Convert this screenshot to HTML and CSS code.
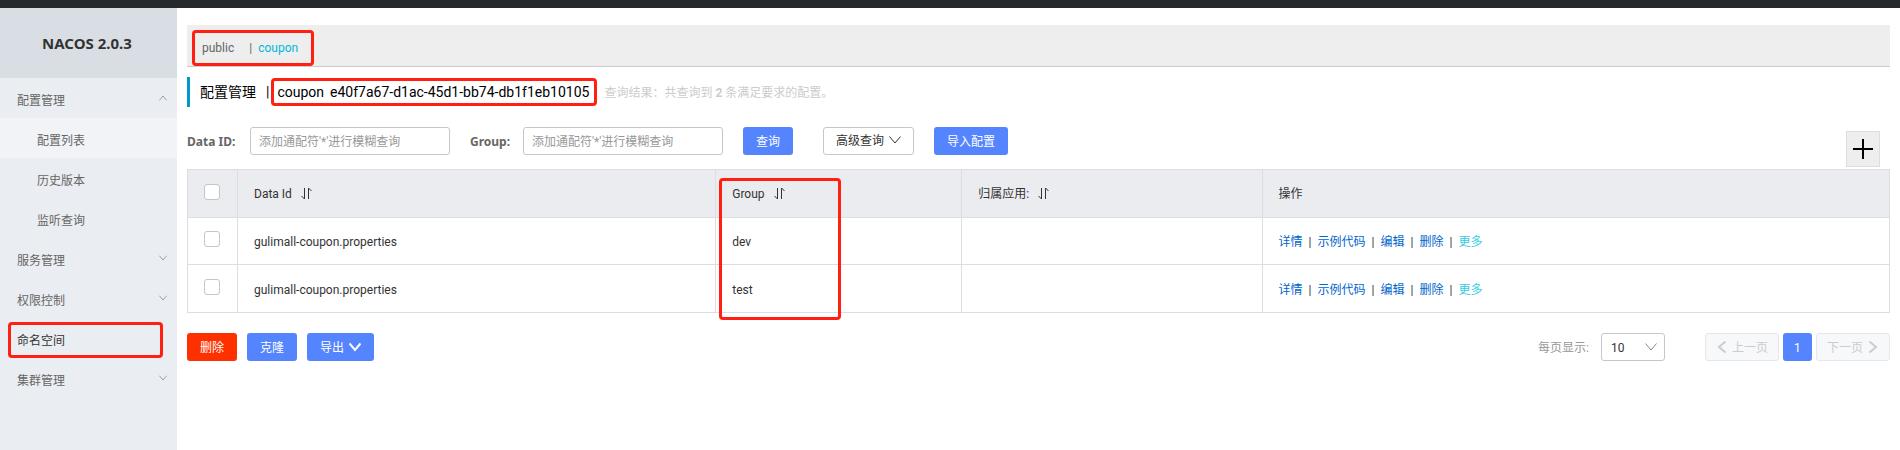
FILE: index.html
```html
<!DOCTYPE html>
<html lang="zh-CN">
<head>
<meta charset="utf-8">
<title>Nacos</title>
<link rel="stylesheet" href="styles.css">
</head>
<body>
<svg class="defs" aria-hidden="true">
  <symbol id="down" viewBox="0 0 12 12"><path d="M.5 2.500L6 9l5.500-6.500"/></symbol>
  <symbol id="up" viewBox="0 0 12 12"><path d="M.5 9.500L6 3l5.500 6.500"/></symbol>
  <symbol id="left" viewBox="0 0 12 12"><path d="M9.500.5L3 6l6.500 5.500"/></symbol>
  <symbol id="right" viewBox="0 0 12 12"><path d="M2.500.5L9 6l-6.500 5.500"/></symbol>
  <symbol id="sort" viewBox="0 0 12 13"><path d="M3.500 1v11L.5 9M7.500 12V1l3 3"/></symbol>
</svg>
<header class="topbar"></header>
<div class="layout">
  <aside class="sidebar">
    <h1 class="brand">NACOS 2.0.3</h1>
    <nav class="menu">
      <a class="item" href="#">配置管理<svg class="caret"><use href="#up"/></svg></a>
      <a class="item sub active" href="#">配置列表</a>
      <a class="item sub" href="#">历史版本</a>
      <a class="item sub" href="#">监听查询</a>
      <a class="item" href="#">服务管理<svg class="caret"><use href="#down"/></svg></a>
      <a class="item" href="#">权限控制<svg class="caret"><use href="#down"/></svg></a>
      <a class="item current" href="#">命名空间<span class="mark mark-menu"></span></a>
      <a class="item" href="#">集群管理<svg class="caret"><use href="#down"/></svg></a>
    </nav>
  </aside>
  <main class="main">
    <div class="namespaces">
      <a class="ns" href="#">public</a><span class="bar">|</span><a class="ns selected" href="#">coupon</a>
      <span class="mark mark-ns"></span>
    </div>
    <div class="heading">
      <h2 class="title">配置管理</h2><span class="divider">|</span>
      <span class="namespace-id"><span>coupon</span><span>e40f7a67-d1ac-45d1-bb74-db1f1eb10105</span><span class="mark mark-id"></span></span>
      <span class="result">查询结果：共查询到 <b>2</b> 条满足要求的配置。</span>
    </div>
    <form class="filters">
      <label class="label" for="dataId">Data ID:</label>
      <input class="input" id="dataId" type="text" placeholder="添加通配符'*'进行模糊查询">
      <label class="label label-group" for="group">Group:</label>
      <input class="input" id="group" type="text" placeholder="添加通配符'*'进行模糊查询">
      <button class="btn primary search" type="button">查询</button>
      <button class="btn advanced" type="button">高级查询<svg class="icon"><use href="#down"/></svg></button>
      <button class="btn primary" type="button">导入配置</button>
      <button class="add" type="button" aria-label="新建配置"><svg viewBox="0 0 20 20"><path d="M0 10h20M10 0v20"/></svg></button>
    </form>
    <table class="table">
      <colgroup><col class="c-check"><col class="c-data"><col class="c-group"><col class="c-app"><col></colgroup>
      <thead>
        <tr>
          <th class="check"><input type="checkbox" aria-label="全选"></th>
          <th>Data Id<svg class="sort"><use href="#sort"/></svg></th>
          <th class="group-head">Group<svg class="sort"><use href="#sort"/></svg><span class="mark mark-group"></span></th>
          <th>归属应用:<svg class="sort"><use href="#sort"/></svg></th>
          <th>操作</th>
        </tr>
      </thead>
      <tbody>
        <tr>
          <td class="check"><input type="checkbox" aria-label="dev"></td>
          <td>gulimall-coupon.properties</td><td>dev</td><td></td>
          <td><div class="actions"><a href="#">详情</a><span>|</span><a href="#">示例代码</a><span>|</span><a href="#">编辑</a><span>|</span><a href="#">删除</a><span>|</span><a class="more" href="#">更多</a></div></td>
        </tr>
        <tr>
          <td class="check"><input type="checkbox" aria-label="test"></td>
          <td>gulimall-coupon.properties</td><td>test</td><td></td>
          <td><div class="actions"><a href="#">详情</a><span>|</span><a href="#">示例代码</a><span>|</span><a href="#">编辑</a><span>|</span><a href="#">删除</a><span>|</span><a class="more" href="#">更多</a></div></td>
        </tr>
      </tbody>
    </table>
    <div class="footer">
      <button class="btn danger" type="button">删除</button>
      <button class="btn primary" type="button">克隆</button>
      <button class="btn primary" type="button">导出<svg class="icon"><use href="#down"/></svg></button>
      <div class="pagination">
        <label class="size-label" for="size">每页显示:</label>
        <span class="select"><select id="size"><option>10</option></select><svg class="icon"><use href="#down"/></svg></span>
        <button class="btn page" type="button" disabled><svg class="icon"><use href="#left"/></svg>上一页</button>
        <button class="btn primary number" type="button">1</button>
        <button class="btn page" type="button" disabled>下一页<svg class="icon"><use href="#right"/></svg></button>
      </div>
    </div>
  </main>
</div>
</body>
</html>
```
FILE: styles.css
```css
* { box-sizing: border-box; }

body {
  margin: 0;
  min-height: 100vh;
  display: flex;
  flex-direction: column;
  background: #fff;
  color: #333;
  font: 12px/18px Roboto, "Noto Sans CJK SC", sans-serif;
}

a { color: inherit; text-decoration: none; }
button, input, select { font: inherit; }
.defs { position: absolute; width: 0; height: 0; }
svg { fill: none; stroke: currentColor; stroke-width: 1; }

.topbar { height: 8px; background: #252a2f; }
.layout { flex: 1; display: flex; }

.sidebar { flex: 0 0 177px; background: #eaedf1; }
.brand {
  margin: 0;
  height: 70px;
  padding-right: 3px;
  background: #d9dee4;
  font: bold 15px/70px "Noto Sans", sans-serif;
  text-align: center;
}
.item {
  position: relative;
  display: flex;
  justify-content: space-between;
  height: 40px;
  padding: 0 10px 0 17px;
  line-height: 46px;
  color: #666;
}
.sub { padding-left: 37px; }
.active { background: #f1f3f7; }
.current { color: #333; }
.caret { width: 8px; height: 8px; margin-top: 16px; color: #777; }

/* Red highlight frames laid over the content */
.mark {
  position: absolute;
  border: 3px solid #ff2012;
  border-radius: 4px;
  pointer-events: none;
}
.mark-menu { inset: 4px 14px 0 8px; }
.mark-ns { top: 5px; left: 5px; width: 122px; height: 36px; }
.mark-id { inset: 1px -8px 1px -6px; }
.mark-group { top: 8px; left: 3px; width: 122px; height: 142px; }

.main { flex: 1; min-width: 0; padding: 17px 10px 0; }

.namespaces {
  position: relative;
  display: flex;
  height: 42px;
  padding-left: 15px;
  border-bottom: 1px solid #ccc;
  background: #eee;
  line-height: 46px;
  color: #666;
}
.bar { margin: 0 6px 0 15px; }
.selected { color: #00b7d8; }

.heading {
  display: flex;
  height: 30px;
  margin-top: 10px;
  padding-left: 10px;
  border-left: 3px solid #09c;
  line-height: 30px;
  color: #000;
}
.title { margin: 0; font-size: 14px; font-weight: normal; }
.divider { margin: 0 8px 0 10px; font-size: 14px; }
.namespace-id { position: relative; display: flex; gap: 6px; font-size: 14px; }
.result { margin-left: 15px; line-height: 32px; color: #ccc; }

.filters {
  display: flex;
  align-items: flex-start;
  margin-top: 20px;
  padding-bottom: 2px;
}
.label {
  flex: 0 0 63px;
  color: #666;
  font: bold 12px/30px "Noto Sans", sans-serif;
}
.label-group { flex-basis: 53px; margin-left: 20px; }
.input {
  width: 200px;
  height: 28px;
  padding: 2px 8px 0;
  border: 1px solid #c4c6cf;
  border-radius: 3px;
}
.input::placeholder { color: #999; }

.btn {
  display: inline-flex;
  align-items: center;
  justify-content: center;
  gap: 5px;
  height: 28px;
  padding: 2px 12px 0;
  border: 1px solid transparent;
  border-radius: 3px;
  white-space: nowrap;
}
.icon { flex: none; width: 12px; height: 12px; margin-bottom: 2px; }
.primary { background: #5584ff; color: #fff; }
.primary .icon { stroke-width: 2; }
.danger { background: #ff3000; color: #fff; }
.search { margin-left: 20px; }
.advanced {
  margin: 0 20px 0 30px;
  padding-top: 0;
  border-color: #c4c6cf;
  background: #fff;
  color: #333;
}
.add {
  width: 34px;
  height: 36px;
  margin: 4px 10px 0 auto;
  padding: 0;
  border: 1px solid #ddd;
  background: #eee;
  color: #000;
}
.add svg { display: block; width: 20px; height: 20px; margin: 0 auto; stroke-width: 2; }

.table {
  width: 100%;
  table-layout: fixed;
  border-collapse: collapse;
}
.c-check { width: 50px; }
.c-data { width: 28.1%; }
.c-group { width: 14.45%; }
.c-app { width: 17.65%; }
.table th, .table td {
  height: 47px;
  padding: 2px 16px 0;
  border: 1px solid #dcdee3;
  text-align: left;
  font-weight: normal;
}
.table th { height: 48px; padding-top: 0; background: #ebecf0; }
.table tr:last-child td { height: 48px; }
.table .check { padding-top: 0; }
.table .group-head { position: relative; }
.sort { width: 12px; height: 13px; margin-left: 9px; vertical-align: -2px; }
input[type="checkbox"] {
  display: block;
  width: 16px;
  height: 16px;
  margin: 0 0 4px;
  appearance: none;
  border: 1px solid #c4c6cf;
  border-radius: 3px;
  background: #fff;
}
.actions { display: flex; gap: 6px; color: #333; }
.actions a { color: #06c; }
.actions .more { color: #33cde5; }

.footer { display: flex; gap: 10px; margin-top: 20px; }
.pagination { display: flex; gap: 4px; margin-left: auto; }
.size-label { line-height: 30px; color: #999; margin-right: 8px; }
.select { position: relative; width: 64px; margin-right: 36px; color: #888; }
.select select {
  width: 100%;
  height: 28px;
  padding: 2px 9px 0;
  appearance: none;
  border: 1px solid #c4c6cf;
  border-radius: 3px;
  background: #fff;
  color: #333;
}
.select .icon { position: absolute; top: 8px; right: 8px; pointer-events: none; }
.page { gap: 4px; padding: 2px 10px 0; border-color: #e6e7eb; background: #f7f8fa; color: #ccc; }
.page .icon { stroke-width: 2; }
.number { width: 29px; padding: 2px 0 0; }
```
